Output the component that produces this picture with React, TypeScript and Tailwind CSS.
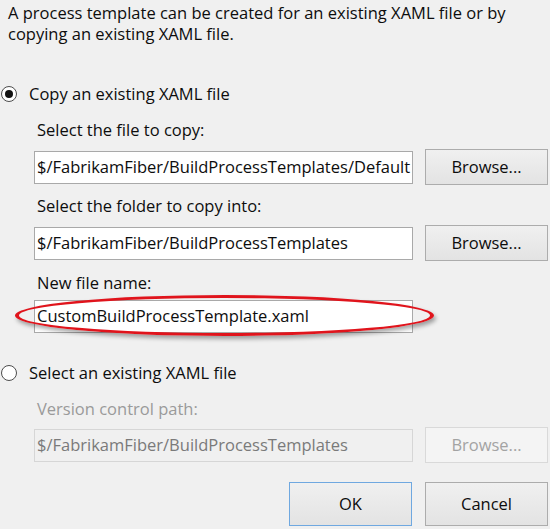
import React from 'react';

const font = "font-['Open_Sans','Noto_Sans',sans-serif]";

function Radio({ checked }: { checked: boolean }) {
  return (
    <span className="flex h-[16px] w-[16px] shrink-0 items-center justify-center rounded-full border border-[#4d4d4d] bg-white">
      {checked && <span className="h-[8px] w-[8px] rounded-full bg-[#111]" />}
    </span>
  );
}

function Field({ value, disabled }: { value: string; disabled?: boolean }) {
  return (
    <div
      className={`flex h-[33px] w-[379px] items-center overflow-hidden whitespace-nowrap border px-[2px] text-[16.5px] ${
        disabled ? 'border-[#d6d6d6] bg-[#f0f0f0] text-[#7a7a7a]' : 'border-[#a9a9a9] bg-white text-[#0d0d0d]'
      }`}
    >
      {value}
    </div>
  );
}

function Button({ label, disabled, primary, tall }: { label: string; disabled?: boolean; primary?: boolean; tall?: boolean }) {
  return (
    <button
      className={`flex ${tall ? 'h-[44px]' : 'h-[36px]'} w-[123px] items-center justify-center border text-[16.5px] ${
        disabled
          ? 'border-[#d9d9d9] bg-[#f4f4f4] text-[#a3a3a3]'
          : primary
          ? 'border-[#6fa8e0] bg-gradient-to-b from-[#f0f0f0] to-[#e3e3e3] text-[#0d0d0d]'
          : 'border-[#acacac] bg-gradient-to-b from-[#f0f0f0] to-[#e3e3e3] text-[#0d0d0d]'
      }`}
    >
      {label}
    </button>
  );
}

export default function App() {
  return (
    <div className={`relative h-[529px] w-[550px] overflow-hidden bg-[#f0f0f0] text-[#0d0d0d] ${font}`}>
      <p className="pl-[8px] pt-[2px] text-[16.5px] leading-[21px]">
        A process template can be created for an existing XAML file or by
        <br />
        copying an existing XAML file.
      </p>

      {/* copy existing */}
      <div className="mt-[40px] flex items-center gap-[12px] pl-[1px] text-[16.5px] leading-[20px]">
        <Radio checked />
        <span>Copy an existing XAML file</span>
      </div>

      <div className="pl-[34px]">
        <div className="mt-[16px] pl-[3px] text-[16.5px] leading-[20px]">Select the file to copy:</div>
        <div className="mt-[9px] flex items-center gap-[12px]">
          <Field value="$/FabrikamFiber/BuildProcessTemplates/Default" />
          <Button label="Browse..." />
        </div>

        <div className="mt-[11px] pl-[3px] text-[16.5px] leading-[20px]">Select the folder to copy into:</div>
        <div className="mt-[9px] flex items-center gap-[12px]">
          <Field value="$/FabrikamFiber/BuildProcessTemplates" />
          <Button label="Browse..." />
        </div>

        <div className="mt-[12px] pl-[3px] text-[16.5px] leading-[20px]">New file name:</div>
        <div className="relative mt-[7px] w-[379px]">
          <Field value="CustomBuildProcessTemplate.xaml" />
          <div className="pointer-events-none absolute left-[-19px] top-[-5px] h-[41px] w-[419px] rounded-[50%] border-x-[4px] border-y-[3px] border-[#e0141c] shadow-[2px_3px_4px_rgba(0,0,0,0.35)]" />
        </div>
      </div>

      {/* select existing */}
      <div className="mt-[30px] flex items-center gap-[12px] pl-[1px] text-[16.5px] leading-[20px]">
        <Radio checked={false} />
        <span>Select an existing XAML file</span>
      </div>

      <div className="pl-[34px]">
        <div className="mt-[16px] pl-[3px] text-[16.5px] leading-[20px] text-[#9a9a9a]">Version control path:</div>
        <div className="mt-[8px] flex items-center gap-[12px]">
          <Field value="$/FabrikamFiber/BuildProcessTemplates" disabled />
          <Button label="Browse..." disabled />
        </div>
      </div>

      <div className="mt-[19px] flex justify-end gap-[13px] pr-[2px]">
        <Button label="OK" primary tall />
        <Button label="Cancel" tall />
      </div>
    </div>
  );
}
